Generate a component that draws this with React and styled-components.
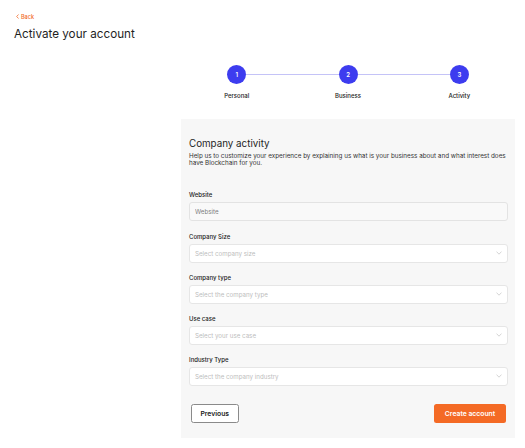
import React from "react";
import styled, { createGlobalStyle } from "styled-components";

const Global = createGlobalStyle`
  html, body { margin: 0; padding: 0; background: #fff; }
  body { font-family: Inter, "Noto Sans", sans-serif; color: #1f1f1f; -webkit-font-smoothing: antialiased; }
  * { box-sizing: border-box; }
`;

const Page = styled.div`
  width: 525px;
  padding: 12.5px 10px 10px 14px;
`;

const BackLink = styled.a`
  display: flex;
  width: fit-content;
  align-items: center;
  gap: 2px;
  height: 8px;
  margin-left: 2px;
  color: #f26a2a;
  font-size: 5.5px;
  line-height: 8px;
  font-weight: 500;
  text-decoration: none;
`;

const Title = styled.h1`
  margin: 6px 0 0;
  font-size: 11.7px;
  line-height: 15px;
  font-weight: 400;
  color: #1f1f1f;
`;

const Layout = styled.div`
  display: grid;
  grid-template-columns: 167px 334px;
  margin-top: 23.5px;
`;

const Main = styled.div`
  grid-column: 2;
`;

const Stepper = styled.ol`
  list-style: none;
  margin: 0;
  padding: 0;
  display: grid;
  grid-template-columns: repeat(3, 1fr);
`;

const Step = styled.li`
  display: flex;
  flex-direction: column;
  align-items: center;
`;

const Track = styled.div`
  display: flex;
  align-items: center;
  width: 100%;
`;

const Connector = styled.span`
  flex: 1;
  height: 1.5px;
  background: ${(p) => (p.$hidden ? "transparent" : "#c4c3f7")};
`;

const Circle = styled.span`
  width: 19px;
  height: 19px;
  border-radius: 50%;
  background: #3d3cef;
  color: #fff;
  display: flex;
  align-items: center;
  justify-content: center;
  font-size: 6px;
  font-weight: 600;
`;

const StepLabel = styled.span`
  margin-top: 8px;
  font-size: 6px;
  line-height: 8px;
  font-weight: 500;
  color: #222;
`;

const Panel = styled.section`
  margin-top: 19px;
  background: #f7f7f7;
  padding: 18.5px 7px 15px 8px;
`;

const PanelTitle = styled.h2`
  margin: 0;
  font-size: 9.8px;
  line-height: 12px;
  font-weight: 400;
  color: #1f1f1f;
`;

const Description = styled.p`
  margin: 3px 0 0;
  font-size: 6.3px;
  line-height: 7px;
  color: #333;
`;

const Fields = styled.div`
  margin-top: 24px;
  display: flex;
  flex-direction: column;
  gap: 11px;
`;

const Field = styled.label`
  display: flex;
  flex-direction: column;
  gap: 3px;
  margin-bottom: ${(p) => (p.$extra ? "1px" : "0")};
`;

const FieldLabel = styled.span`
  font-size: 6px;
  line-height: 8px;
  font-weight: 500;
  color: #222;
`;

const TextInput = styled.input`
  height: 19px;
  border: 1px solid #e3e3e3;
  border-radius: 3px;
  background: #f9f9f9;
  padding: 0 5px;
  font-family: inherit;
  font-size: 6.2px;
  color: #222;
  outline: none;
  &::placeholder { color: #7d7d7d; }
`;

const SelectBox = styled.div`
  height: 19px;
  border: 1px solid #e6e6e6;
  border-radius: 3px;
  background: #fff;
  display: flex;
  align-items: center;
  justify-content: space-between;
  padding: 0 5px;
  font-size: 6.2px;
  color: #bdbdbd;
`;

const Actions = styled.div`
  margin-top: 18px;
  display: flex;
  justify-content: space-between;
  padding: 0 2px 0 1.5px;
`;

const Button = styled.button`
  height: 19px;
  width: ${(p) => p.$w}px;
  padding: 0;
  border-radius: 2.5px;
  font-family: inherit;
  font-size: 6.8px;
  font-weight: 600;
  cursor: pointer;
  border: ${(p) => (p.$primary ? "none" : "1px solid #8a8a8a")};
  background: ${(p) => (p.$primary ? "#f46a25" : "#fff")};
  color: ${(p) => (p.$primary ? "#fff" : "#222")};
`;

const Chevron = () => (
  <svg width="6" height="4" viewBox="0 0 6 4" fill="none">
    <polyline points="0.5,0.6 3,3.2 5.5,0.6" stroke="#c2c2c2" strokeWidth="0.7" />
  </svg>
);

const BackChevron = () => (
  <svg width="3" height="5" viewBox="0 0 3 5" fill="none">
    <polyline points="2.5,0.5 0.7,2.5 2.5,4.5" stroke="#f26a2a" strokeWidth="0.8" />
  </svg>
);

const steps = ["Personal", "Business", "Activity"];

const selects = [
  ["Company Size", "Select company size"],
  ["Company type", "Select the company type"],
  ["Use case", "Select your use case"],
  ["Industry Type", "Select the company industry"],
];

export default function App() {
  return (
    <>
      <Global />
      <Page>
        <BackLink href="#">
          <BackChevron />
          Back
        </BackLink>
        <Title>Activate your account</Title>
        <Layout>
          <Main>
            <Stepper>
              {steps.map((s, i) => (
                <Step key={s}>
                  <Track>
                    <Connector $hidden={i === 0} />
                    <Circle>{i + 1}</Circle>
                    <Connector $hidden={i === steps.length - 1} />
                  </Track>
                  <StepLabel>{s}</StepLabel>
                </Step>
              ))}
            </Stepper>
            <Panel>
              <PanelTitle>Company activity</PanelTitle>
              <Description>
                Help us to customize your experience by explaining us what is your business about and what interest does have Blockchain for you.
              </Description>
              <Fields>
                <Field $extra>
                  <FieldLabel>Website</FieldLabel>
                  <TextInput placeholder="Website" />
                </Field>
                {selects.map(([label, ph]) => (
                  <Field key={label}>
                    <FieldLabel>{label}</FieldLabel>
                    <SelectBox>
                      <span>{ph}</span>
                      <Chevron />
                    </SelectBox>
                  </Field>
                ))}
              </Fields>
              <Actions>
                <Button $w={48.5}>Previous</Button>
                <Button $primary $w={72}>Create account</Button>
              </Actions>
            </Panel>
          </Main>
        </Layout>
      </Page>
    </>
  );
}
